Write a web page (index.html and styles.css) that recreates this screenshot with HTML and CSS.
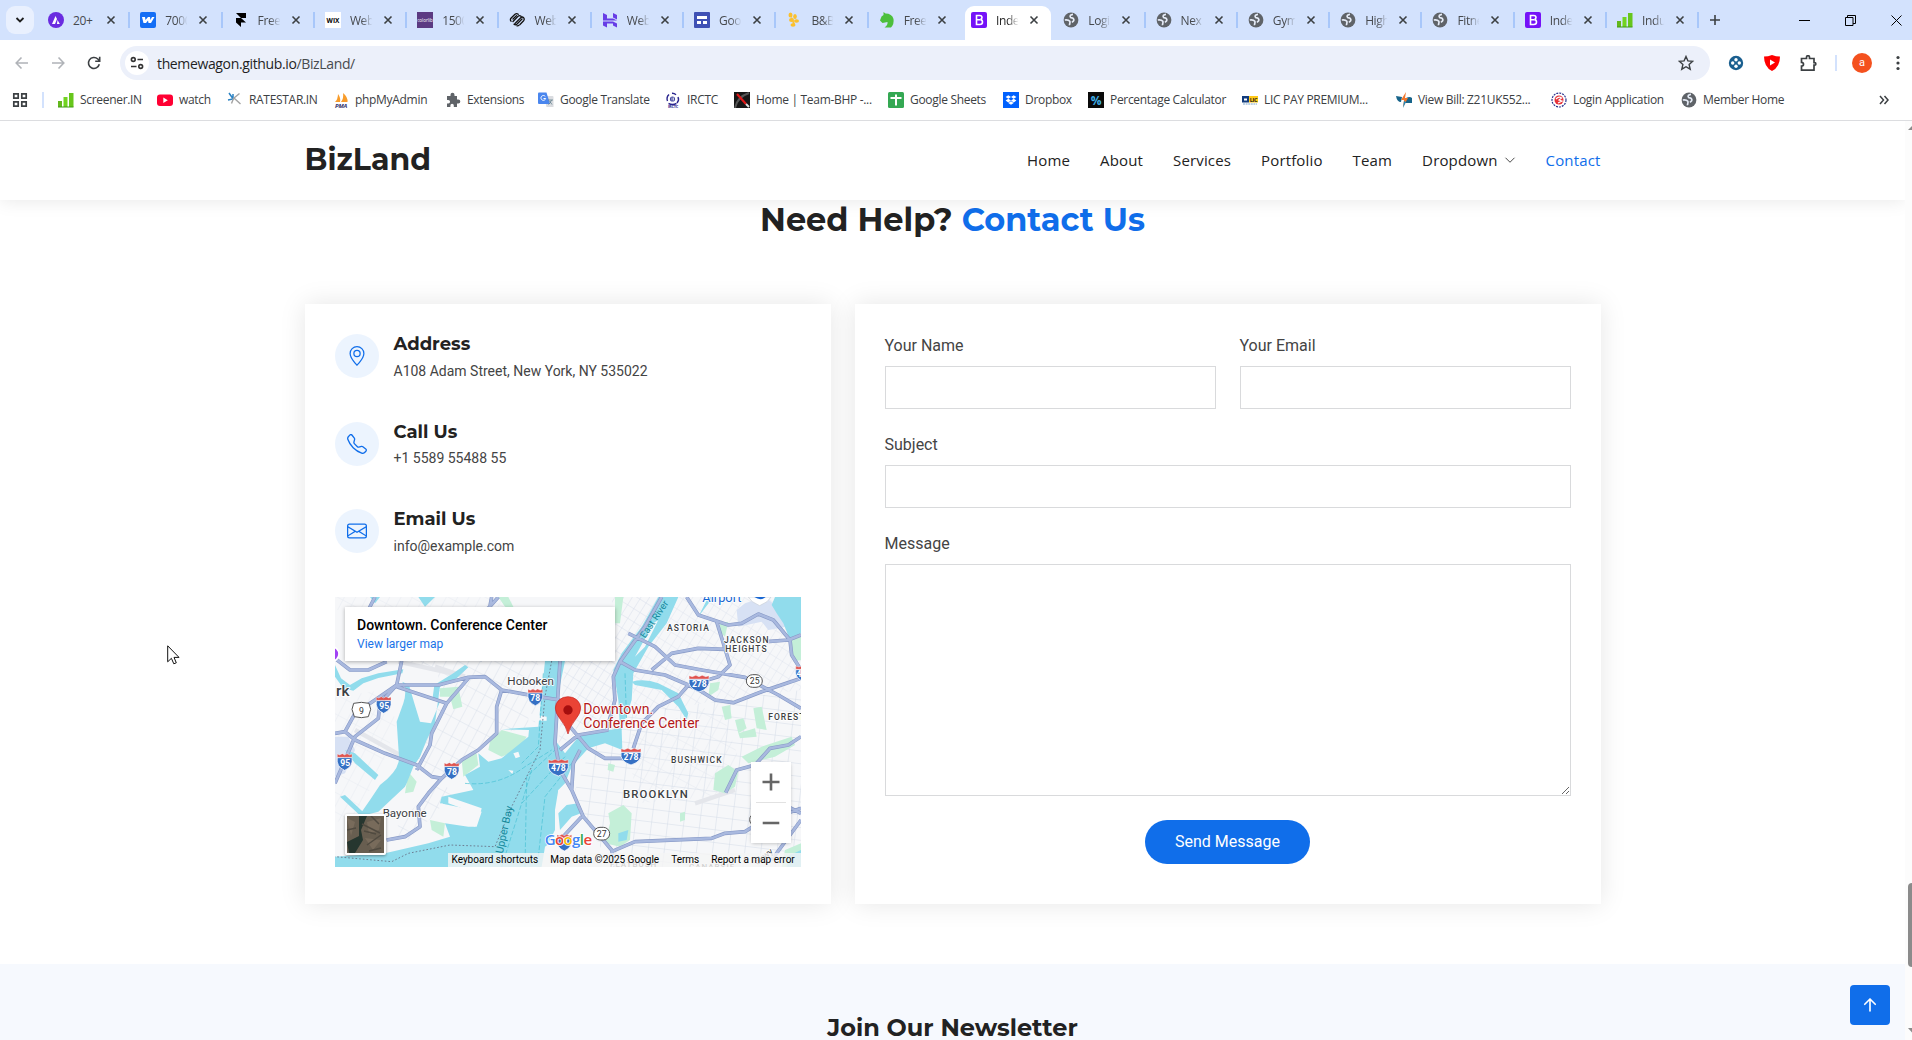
FILE: index.html
```html
<!DOCTYPE html>
<html lang="en">
<head>
<meta charset="utf-8">
<title>BizLand</title>
<link rel="stylesheet" href="styles.css">
</head>
<body>
<svg class="defs" width="0" height="0" aria-hidden="true">
  <symbol id="close" viewBox="0 0 10 10"><path d="M1.500 1.500l7 7M8.500 1.500l-7 7" stroke="#3c4043" stroke-width="1.600"/></symbol>
  <symbol id="globe" viewBox="0 0 16 16"><circle cx="8" cy="8" r="7.400" fill="#5f6368"/><path d="M10 2.300C7.500 2.500 6.500 4 7.500 5.300c1 1 3 .2 3.300 2.200.2 1.500-.8 2.300-2 2.700M1.800 8c2-.3 4 0 5 1.300.8 1.300-.6 2.200-.2 4" fill="none" stroke="#e6ecf7" stroke-width="1.700"/></symbol>
  <symbol id="bars" viewBox="0 0 16 16"><rect x="0" y="9" width="4" height="6" fill="#63b81c"/><rect x="5.500" y="5" width="4" height="10" fill="#72d321"/><rect x="11" y="1" width="4.500" height="14" fill="#67c61c"/><path d="M0 15h15.500" stroke="#3f9a12"/></symbol>
  <symbol id="boot" viewBox="0 0 16 16"><rect width="16" height="16" rx="2" fill="#7512f8"/><path d="M5.500 3.500h3.200q2.300 0 2.300 2.100 0 1.700-1.700 2 2.200.2 2.200 2.400 0 2.500-2.700 2.500H5.500zM5.500 7.800h3.500" fill="none" stroke="#fff" stroke-width="1.600"/></symbol>
</svg>

<div class="tabs">
  <div class="tab-search"><svg width="10" height="10" viewBox="0 0 10 10"><path d="M1.500 3L5 6.500 8.500 3" fill="none" stroke="#1f1f1f" stroke-width="1.800"/></svg></div>
  <div class="tab"><svg class="fav" viewBox="0 0 16 16"><circle cx="8" cy="8" r="8" fill="#6a2be0"/><path d="M4 12l3.500-8 1.500 3-2 5zM9.500 8l2.300 4H9z" fill="#fff"/></svg><span>20+</span><svg class="x"><use href="#close"/></svg></div>
  <div class="tab"><svg class="fav" viewBox="0 0 16 16"><rect width="16" height="16" rx="2" fill="#146ef5"/><path d="M2 5h3l.5 3L8 5h2l.4 3L12 5h2.500l-3.500 6H8.500L8 8.500 6 11H3.500z" fill="#fff"/></svg><span>7000</span><svg class="x"><use href="#close"/></svg></div>
  <div class="tab"><svg class="fav" viewBox="0 0 16 16"><path d="M3 1h10v5H8l5 4.500H8V15l-5-4.500V6h5z" fill="#000"/></svg><span>Free</span><svg class="x"><use href="#close"/></svg></div>
  <div class="tab"><svg class="fav" viewBox="0 0 16 16"><rect width="16" height="16" fill="#fff"/><text x="8" y="10.500" text-anchor="middle" font-size="6.500" font-weight="700">WIX</text></svg><span>Web</span><svg class="x"><use href="#close"/></svg></div>
  <div class="tab"><svg class="fav" viewBox="0 0 16 16"><rect width="16" height="16" fill="#5b3a82"/><text x="8" y="9.500" text-anchor="middle" font-size="4.500" fill="#fff">colorlib</text></svg><span>1500</span><svg class="x"><use href="#close"/></svg></div>
  <div class="tab"><svg class="fav" viewBox="0 0 16 16"><g fill="none" stroke="#111" stroke-width="1.300" stroke-linecap="round"><path d="M4 9.500L9 4.300q1.500-1.300 3 0M2 9.200q-1.300-1.600.2-3.200L6 2.300q1.600-1.300 3.200 0M6 11.500l6-6q1.400-1 2.600.2 1.200 1.500 0 3L11 12.500M5 12.300q1.400 1 2.800 0L13 7M8 13.800q1 .3 2-.5M4 7L7.500 3.600"/></g></svg><span>Web</span><svg class="x"><use href="#close"/></svg></div>
  <div class="tab"><svg class="fav" viewBox="0 0 16 16"><path d="M1 1l4 2v3.500h6L15 8.500H1zM11 1l4 2v4.500l-4-2zM1 9.500h10l4 2v4l-4-2v-2H5v4l-4-2z" fill="#673de6"/></svg><span>Web</span><svg class="x"><use href="#close"/></svg></div>
  <div class="tab"><svg class="fav" viewBox="0 0 16 16"><rect width="16" height="16" rx="1" fill="#3f51b5"/><path d="M3 4h10v3H3zM3 9h4v3H3zM9 9h4v3H9z" fill="#fff"/></svg><span>Goo</span><svg class="x"><use href="#close"/></svg></div>
  <div class="tab"><svg class="fav" viewBox="0 0 16 16"><g fill="#fbc02d"><ellipse cx="4.500" cy="3" rx="2" ry="2.500"/><ellipse cx="9" cy="4.500" rx="1.800" ry="2.500"/><ellipse cx="5.500" cy="8" rx="2.500" ry="2"/><ellipse cx="10.500" cy="9" rx="2.500" ry="1.800"/><ellipse cx="7" cy="13" rx="2.500" ry="1.800"/><path d="M5 3l4 9-2 1z"/></g></svg><span>B&amp;B</span><svg class="x"><use href="#close"/></svg></div>
  <div class="tab no-sep"><svg class="fav" viewBox="0 0 16 16"><path d="M4.500 0l2 1.500Q13 1.500 14.500 7q.8 5-2.500 8.500H5.500Q9 13 8.500 10L3.500 11 1 8.500 2.500 4.500 4.500 3z" fill="#4cbf3c"/></svg><span>Free</span><svg class="x"><use href="#close"/></svg></div>
  <div class="tab active no-sep"><svg class="fav"><use href="#boot"/></svg><span>Inde</span><svg class="x"><use href="#close"/></svg></div>
  <div class="tab"><svg class="fav"><use href="#globe"/></svg><span>Logi</span><svg class="x"><use href="#close"/></svg></div>
  <div class="tab"><svg class="fav"><use href="#globe"/></svg><span>Nex</span><svg class="x"><use href="#close"/></svg></div>
  <div class="tab"><svg class="fav"><use href="#globe"/></svg><span>Gym</span><svg class="x"><use href="#close"/></svg></div>
  <div class="tab"><svg class="fav"><use href="#globe"/></svg><span>High</span><svg class="x"><use href="#close"/></svg></div>
  <div class="tab"><svg class="fav"><use href="#globe"/></svg><span>Fitne</span><svg class="x"><use href="#close"/></svg></div>
  <div class="tab"><svg class="fav"><use href="#boot"/></svg><span>Inde</span><svg class="x"><use href="#close"/></svg></div>
  <div class="tab"><svg class="fav"><use href="#bars"/></svg><span>Indu</span><svg class="x"><use href="#close"/></svg></div>
  <svg class="plus" width="12" height="12" viewBox="0 0 12 12"><path d="M6 1v10M1 6h10" stroke="#3c4043" stroke-width="1.600"/></svg>
  <div class="window-controls">
    <svg width="11" height="11" viewBox="0 0 11 11"><path d="M0 5.500h11" stroke="#000"/></svg>
    <svg width="11" height="11" viewBox="0 0 11 11"><path d="M.5 2.500h7.500v8H.5zM2.500 2.500V.5h8v8H8" fill="none" stroke="#000"/></svg>
    <svg width="11" height="11" viewBox="0 0 11 11"><path d="M.5.5l10 10M10.500.5l-10 10" stroke="#000"/></svg>
  </div>
</div>

<div class="toolbar">
  <svg class="nav-icon" viewBox="0 0 14 14"><path d="M13 7H1.500M6.500 1.500L1.200 7l5.300 5.500" fill="none" stroke="#b0b3b8" stroke-width="1.600"/></svg>
  <svg class="nav-icon" viewBox="0 0 14 14"><path d="M1 7h11.500M7.500 1.500L12.800 7l-5.300 5.500" fill="none" stroke="#b0b3b8" stroke-width="1.600"/></svg>
  <svg class="nav-icon" viewBox="0 0 14 14"><path d="M12.300 8.300A5.500 5.500 0 1 1 10.800 3L12.300 4.500M12.700.8v4.500H8.200" fill="none" stroke="#3c4043" stroke-width="1.600"/></svg>
  <div class="omnibox">
    <div class="tune"><svg width="14" height="14" viewBox="0 0 14 14"><g fill="none" stroke="#333" stroke-width="1.600"><circle cx="3.300" cy="3.500" r="1.900"/><circle cx="10.700" cy="10.500" r="1.900"/><path d="M7.500 3.500H13M1 10.500h5.500"/></g></svg></div>
    <div class="url">themewagon.github.io<span>/BizLand/</span></div>
    <svg class="star" width="16" height="16" viewBox="0 0 16 16"><path d="M8 1.500l1.900 4.400 4.800.4-3.600 3.200 1.100 4.700L8 11.700l-4.200 2.500 1.100-4.700L1.300 6.300l4.800-.4z" fill="none" stroke="#3c4043" stroke-width="1.400"/></svg>
  </div>
  <div class="actions">
    <svg width="16" height="16" viewBox="0 0 16 16"><circle cx="8" cy="8" r="7.200" fill="#1a5f8f"/><g fill="#fff"><circle cx="8" cy="4.700" r="1.700"/><circle cx="8" cy="11.300" r="1.700"/><circle cx="4.700" cy="8" r="1.700"/><circle cx="11.300" cy="8" r="1.700"/></g></svg>
    <svg width="16" height="16" viewBox="0 0 16 16"><path d="M0 1.500Q4 1.500 8 0q4 1.500 8 1.500Q16 12 8 16 0 12 0 1.500z" fill="#f00"/><path d="M6 4.500l5 3-5 3z" fill="#fff"/></svg>
    <svg width="17" height="17" viewBox="0 0 17 17"><path d="M1.500 3.500h5V2.200a1.500 1.500 0 0 1 3 0v1.300h4.500v4.200h.6a1.200 1.200 0 0 1 0 2.500h-.6v5H1.500v-4q2 0 2-1.900t-2-1.900z" fill="none" stroke="#3c4043" stroke-width="1.700"/></svg>
    <i class="divider"></i>
    <div class="avatar">a</div>
    <svg width="4" height="16" viewBox="0 0 4 16"><g fill="#3c4043"><circle cx="2" cy="2.500" r="1.600"/><circle cx="2" cy="8" r="1.600"/><circle cx="2" cy="13.500" r="1.600"/></g></svg>
  </div>
</div>

<div class="bookmarks">
  <svg class="apps" width="16" height="16" viewBox="0 0 16 16"><path d="M1.800 1.800h4.400v4.400H1.800zM9.800 1.800h4.400v4.400H9.800zM1.800 9.800h4.400v4.400H1.800zM9.800 9.800h4.400v4.400H9.800z" fill="none" stroke="#3c4043" stroke-width="1.700"/></svg>
  <i class="divider"></i>
  <div class="marks">
    <div><svg><use href="#bars"/></svg>Screener.IN</div>
    <div><svg viewBox="0 0 16 16"><rect y="2.500" width="16" height="11.500" rx="3" fill="#f03"/><path d="M6.300 5.500l4.500 2.700-4.500 2.700z" fill="#fff"/></svg>watch</div>
    <div><svg viewBox="0 0 16 16"><path d="M2 1l3.500 5M6 2v5L1 8" stroke="#2a82c4" stroke-width="1.500" fill="none"/><path d="M12.500 1.500L7 6l6.500 6M6.500 6.500l-2 5" stroke="#a3a3a3" stroke-width="1.400" fill="none"/></svg>RATESTAR.IN</div>
    <div><svg viewBox="0 0 16 16"><path d="M2 10Q5 7 5 2q3 4 2 8zM8 10q3-4 2-9 5 4 4.500 9z" fill="#f89c2a"/><text x="8" y="16" text-anchor="middle" font-size="6" font-weight="700" font-style="italic" fill="#33336b">PMA</text></svg>phpMyAdmin</div>
    <div><svg viewBox="0 0 16 16"><path d="M2 4h3.500V2.800a2 2 0 0 1 4 0V4H12v3.500h1.300a2 2 0 0 1 0 4H12V15H8.800v-1.500a1.700 1.700 0 0 0-3.400 0V15H2v-3.500h1.300a1.700 1.700 0 0 0 0-3.500H2z" fill="#5f6368"/></svg>Extensions</div>
    <div><svg viewBox="0 0 16 16"><path d="M6 4h8.500q1 0 1 1v10h-7z" fill="#dadce0"/><path d="M1 .5h7.500L12 12H1q-1 0-1-1V1.500q0-1 1-1z" fill="#4a86ee"/><path d="M7.300 4.500a2.400 2.400 0 1 0 .4 2H5.500" fill="none" stroke="#fff"/><path d="M10 8h5M13.500 8q-1 3-3 4.500M11.500 9l2.500 3.500" fill="none" stroke="#607d8b" stroke-width=".8"/></svg>Google Translate</div>
    <div><svg viewBox="0 0 16 16"><g fill="none" stroke="#29258e" stroke-width="1.400"><path d="M4 2.500A6 6 0 0 0 2.500 9M7 1.200a5.500 5.500 0 0 1 4 1.500M13 5q1.500 3-1 6M3.500 11.500q4 2 8 0"/></g><circle cx="7.500" cy="7" r="2.600" fill="#454aa0"/><path d="M7 5.500v3M8.500 5.500v3" stroke="#fff" stroke-width=".7"/><text x="8" y="16" text-anchor="middle" font-size="4" font-weight="700" fill="#29258e">IRCTC</text></svg>IRCTC</div>
    <div><svg viewBox="0 0 16 16"><rect width="16" height="16" fill="#161616"/><path d="M1 16Q3 5 15 1" fill="none" stroke="#555" stroke-width="2"/><path d="M3 2l9 10" stroke="#e01818" stroke-width="2.200"/><path d="M12 12l3 3" stroke="#ddd" stroke-width="2"/></svg>Home | Team-BHP -...</div>
    <div><svg viewBox="0 0 16 16"><rect width="16" height="16" rx="1.500" fill="#34a853"/><path d="M8 2.500v11M2.500 6h11" stroke="#fff" stroke-width="2"/></svg>Google Sheets</div>
    <div><svg viewBox="0 0 16 16"><rect width="16" height="16" fill="#0061fe"/><path d="M5.300 3.200L8 5 5.300 6.800 2.600 5zM10.700 3.200L13.400 5l-2.700 1.800L8 5zM5.300 6.800L8 8.600l-2.700 1.800-2.700-1.800zM10.700 6.800l2.700 1.800-2.700 1.800L8 8.600zM5.300 11L8 9.300l2.700 1.700L8 12.800z" fill="#fff"/></svg>Dropbox</div>
    <div><svg viewBox="0 0 16 16"><rect width="16" height="16" fill="#0a0a0a"/><text x="8" y="12.500" text-anchor="middle" font-size="12" font-weight="700" fill="#3fb0e8">%</text></svg>Percentage Calculator</div>
    <div><svg viewBox="0 0 16 16"><rect y="4" width="7" height="6.500" fill="#123c7d"/><rect x="7" y="4" width="9" height="6.500" fill="#ffc917"/><path d="M2 6.500h3v2H2z" fill="#fff"/><text x="11.500" y="9.500" text-anchor="middle" font-size="5.500" font-weight="700" fill="#222">LIC</text><path d="M1 12h14" stroke="#a8c4dc" stroke-width="1.500" stroke-dasharray="2 .6"/></svg>LIC PAY PREMIUM...</div>
    <div><svg viewBox="0 0 16 16"><path d="M0 4l6 1-1 5q-4 0-5-6zM10 6q4-2 6 0v5H9z" fill="#17648a"/><path d="M10 0L5 8h3l-1 7 5-9H9z" fill="#f0762b"/><path d="M8 9l-1 7 3-6z" fill="#2388ba"/></svg>View Bill: Z21UK552...</div>
    <div><svg viewBox="0 0 16 16"><circle cx="8" cy="8" r="7" fill="#fff" stroke="#27308c" stroke-width="1.200" stroke-dasharray="2 1"/><circle cx="8" cy="8" r="4.500" fill="#e63238"/><path d="M5 7q3-3 5.500-1L8 8l3 1-4 2" fill="none" stroke="#fff" stroke-width="1.200"/></svg>Login Application</div>
    <div><svg><use href="#globe"/></svg>Member Home</div>
  </div>
  <svg class="more" width="10" height="10" viewBox="0 0 10 10"><path d="M1 1l3.500 4L1 9M5.500 1L9 5 5.500 9" fill="none" stroke="#3c4043" stroke-width="1.500"/></svg>
</div>

<div class="viewport">
  <div class="page">
    <header class="header">
      <div class="container">
        <h1 class="logo">BizLand</h1>
        <nav><a>Home</a><a>About</a><a>Services</a><a>Portfolio</a><a>Team</a><a>Dropdown<svg width="12" height="12" viewBox="0 0 16 16"><path d="M2 5l6 6 6-6" fill="none" stroke="#444" stroke-width="1.300"/></svg></a><a class="current">Contact</a></nav>
      </div>
    </header>
    <section class="contact">
      <h2>Need Help? <span>Contact Us</span></h2>
      <div class="container cards">
        <div class="card info">
          <div class="item"><div class="circle"><svg viewBox="0 0 16 16"><path d="M12.166 8.940c-.524 1.062-1.234 2.120-1.960 3.070A31.500 31.500 0 0 1 8 14.580a31.500 31.500 0 0 1-2.206-2.570c-.726-.950-1.436-2.008-1.960-3.070C3.304 7.867 3 6.862 3 6a5 5 0 0 1 10 0c0 .862-.305 1.867-.834 2.940M8 16s6-5.686 6-10A6 6 0 0 0 2 6c0 4.314 6 10 6 10"/><path d="M8 8a2 2 0 1 1 0-4 2 2 0 0 1 0 4m0 1a3 3 0 1 0 0-6 3 3 0 0 0 0 6"/></svg></div><div><h3>Address</h3><p>A108 Adam Street, New York, NY 535022</p></div></div>
          <div class="item"><div class="circle"><svg viewBox="0 0 16 16"><path d="M3.654 1.328a.678.678 0 0 0-1.015-.063L1.605 2.300c-.483.484-.661 1.169-.450 1.770a17.600 17.600 0 0 0 4.168 6.608 17.600 17.600 0 0 0 6.608 4.168c.601.211 1.286.033 1.770-.450l1.034-1.034a.678.678 0 0 0-.063-1.015l-2.307-1.794a.680.680 0 0 0-.580-.122l-2.190.547a1.750 1.750 0 0 1-1.657-.459L5.482 8.062a1.750 1.750 0 0 1-.460-1.657l.548-2.190a.680.680 0 0 0-.122-.580zM1.884.511a1.745 1.745 0 0 1 2.612.163L6.290 2.980c.329.423.445.974.315 1.494l-.547 2.190a.680.680 0 0 0 .178.643l2.457 2.457a.680.680 0 0 0 .644.178l2.189-.547a1.750 1.750 0 0 1 1.494.315l2.306 1.794c.829.645.905 1.870.163 2.611l-1.034 1.034c-.740.740-1.846 1.065-2.877.702a18.600 18.600 0 0 1-7.010-4.420 18.600 18.600 0 0 1-4.420-7.009c-.362-1.030-.037-2.137.703-2.877z"/></svg></div><div><h3>Call Us</h3><p>+1 5589 55488 55</p></div></div>
          <div class="item"><div class="circle"><svg viewBox="0 0 16 16"><path d="M0 4a2 2 0 0 1 2-2h12a2 2 0 0 1 2 2v8a2 2 0 0 1-2 2H2a2 2 0 0 1-2-2zm2-1a1 1 0 0 0-1 1v.217l7 4.200 7-4.200V4a1 1 0 0 0-1-1zm13 2.383-4.708 2.825L15 11.105zm-.034 6.876-5.640-3.471L8 9.583l-1.326-.795-5.640 3.470A1 1 0 0 0 2 13h12a1 1 0 0 0 .966-.741M1 11.105l4.708-2.897L1 5.383z"/></svg></div><div><h3>Email Us</h3><p>info@example.com</p></div></div>
          <div class="map">
            <svg class="tiles" width="466" height="270" viewBox="30 21 1398 810">
              <defs>
                <pattern id="st1" width="34" height="22" patternUnits="userSpaceOnUse" patternTransform="rotate(-58)"><path d="M0 0H34M0 0V22" stroke="#d3dbe7" stroke-width="2.500" fill="none"/></pattern>
                <pattern id="st2" width="48" height="38" patternUnits="userSpaceOnUse" patternTransform="rotate(7)"><path d="M0 0H48M0 0V38" stroke="#d3dbe7" stroke-width="3" fill="none"/></pattern>
                <pattern id="st3" width="30" height="52" patternUnits="userSpaceOnUse" patternTransform="rotate(28)"><path d="M0 0H30M0 0V52" stroke="#d3dbe7" stroke-width="2.500" fill="none"/></pattern>
                <g id="shield"><path d="M-22-11H22Q26 16 0 27-26 16-22-11z" fill="#3570c4" stroke="#fff" stroke-width="2"/><path d="M-22-12v-10l7 3 8-4 7 4 7-4 8 4 7-3v10z" fill="#df5450" stroke="#fff" stroke-width="1"/></g>
                <g id="shield-wide" transform="scale(1.35 1)"><use href="#shield"/></g>
              </defs>
              <rect x="30" y="21" width="1398" height="810" fill="#f6f7f9"/>
              <path d="M220 213L640 213 630 410 520 430 420 500 330 570 250 520 330 400 340 250z" fill="url(#st3)"/>
              <path d="M180 750L340 570 400 620 300 700 250 750z" fill="url(#st3)"/>
              <path d="M30 21H560V60H30zM30 320L180 300 215 400 160 560 90 670 30 700z" fill="url(#st3)" opacity=".5"/>
              <path d="M720 213H880L870 420 760 420 700 470zM860 21H1010L960 100 870 220z" fill="url(#st1)"/>
              <path d="M1060 21H1428V300L1180 330 930 380 920 260z" fill="url(#st1)" opacity=".75"/>
              <path d="M905 370L1428 300V831H860L780 690 750 600 800 470z" fill="url(#st2)"/>
              <path d="M900 440L1180 340 1240 500 1170 620 940 640z" fill="url(#st3)" opacity=".6"/>
              <g fill="none" stroke="#e4e6eb" stroke-width="13"><path d="M220 215L380 250M90 420L270 520M330 230L420 260M1110 640L1230 600"/></g>
              <g fill="#c4efd8">
                <path d="M345 295L400 290 412 350 385 358 375 320 345 320zM495 455L530 420 605 440 580 480 530 500 490 480zM410 510L455 490 460 525 415 560zM250 545L275 575 265 605 240 610zM315 690L360 700 355 740 320 720zM640 560L690 510 710 560 680 575zM520 21H550L570 60 540 50z"/>
                <path d="M870 21L895 21 885 100 870 100zM1185 100L1210 95 1200 140 1183 125zM1380 21H1428V60L1395 40zM1395 150L1428 130V210L1405 215zM1190 350L1215 345 1220 385 1200 390zM1230 390L1255 385 1265 415 1240 430zM1240 430L1290 415 1295 440 1245 445zM1285 355L1310 350 1325 420 1295 415zM1170 550L1210 525 1240 545 1230 590 1200 610 1165 600zM1250 500L1310 470 1400 440 1410 465 1350 500 1270 520zM850 670L895 645 920 670 915 750 885 770 840 760 855 700zM850 520L870 525 865 545 848 540zM1380 780L1428 760V831H1370zM1155 280L1185 275 1180 300 1150 320zM1065 670L1080 665 1080 690 1065 695z"/>
              </g>
              <path d="M30 440L70 440 90 480 60 550 30 560z" fill="#d7e1f4"/>
              <path d="M1235 60L1260 40 1320 21 1370 60 1385 110 1330 120 1310 95 1240 110z" fill="#d7e1f4"/>
              <g fill="#91dcec">
                <path d="M245 580L240 590 160 665 100 680 135 630 165 585Q225 540 222 500L215 395 235 340Q248 300 232 275L252 285 268 340 285 395 318 400 345 335 322 330 328 285 385 250 420 225 430 232 395 265 345 290 340 325 330 400 305 450 285 500 265 530z"/>
                <path d="M30 225L48 265 75 285 110 265 160 250 235 238 232 250 160 264 115 280 85 302 55 295 30 260z"/>
                <path d="M60 480L90 490 160 555 150 570 90 520zM45 620L60 615 140 690 130 700zM135 21H165L150 40zM280 21H330L300 50zM1150 21H1165L1120 80z"/>
                <path d="M660 213H720L700 310 690 450 720 490 765 435 885 415 880 330 865 240 890 190 950 110 1000 21H1060L1025 100 970 170 925 250 920 330 890 420 892 480 840 460 790 475 740 530 720 580 700 600 690 660 690 720 670 760 650 831H30V800L180 790 310 760 375 740 360 700 430 710 455 710 470 665 345 640 350 620 445 600 420 555 465 530 460 490 490 515 530 505 610 440 612 420 530 418 640 410z"/>
                <path d="M1350 21H1428V130L1395 150 1375 100 1355 70 1340 45zM920 275Q960 265 1000 280L1060 310 1090 370 1085 390 1060 350 1010 300 930 285zM880 730L910 720 905 750 880 755zM1385 800L1428 780V831H1385z"/>
              </g>
              <g fill="#f6f7f9"><path d="M370 620L470 655 465 675 370 640zM350 640L455 690 450 710 340 660zM380 585L410 570 430 590 400 600zM930 200L985 100 1000 90 960 170zM565 490L580 485 585 500 572 505zM550 540L565 542 562 552zM610 370L665 380V392H610zM700 600L740 590 775 680 735 700 700 725 695 680zM660 770L700 740 800 760 855 831H650z"/></g>
              <path d="M725 645L760 640 768 670 740 680 705 720 700 670z" fill="#91dcec"/>
              <g fill="none" stroke="#45bfd3" stroke-width="2" stroke-dasharray="14 6"><path d="M420 580Q520 590 600 530L680 480M600 831L605 560 690 480M655 250L640 470 590 520M530 831L590 640 720 500M640 800L660 620 740 520M900 250L905 400M620 540L590 640"/></g>
              <g fill="none" stroke="#6d7f94" stroke-width="3" stroke-dasharray="5 6"><path d="M680 213L660 320 645 480 560 650 510 770 375 765 250 790 200 815 30 800"/></g>
              <g fill="none" stroke="#8799c6" stroke-width="11" stroke-linejoin="round"><path id="r1" d="M30 430L60 425 90 450 180 490 275 525 320 560 350 565 410 510 460 480 515 430 515 350 530 300 480 260 430 262 340 285 215 285 150 330 90 370 60 425M230 213L215 285 165 340 160 385 90 440 30 580M215 290L365 340M430 265L365 340 320 430 315 465 275 540M530 300L640 320 705 330M350 565L310 610 280 650 285 710 240 740 185 750M30 205L75 240 130 240 185 215M520 21L490 55M705 213L690 460 705 540 740 600 775 680 860 780 870 831M705 480L760 435 850 420M735 410L790 475 840 505 915 505M765 480L745 520 740 600M1010 21L960 110 885 215 865 260 870 330 845 420M885 215L930 240 1020 255 1090 285 1130 305 1170 330 1225 338 1310 305 1428 265M925 475L950 400 1000 350 1060 320 1090 285M910 130L990 170 1050 225 1130 240 1260 262 1360 315 1428 355M980 240L1040 190 1120 175 1200 178M1085 21L1120 75 1210 105 1250 100 1300 72 1345 90 1395 150 1400 195 1425 235M1175 95L1195 160 1215 225 1180 260 1130 275M1325 155L1390 150 1428 135M1202 608L1235 540 1290 525 1335 475 1390 465 1428 440M860 785L930 755 1160 745 1200 730 1260 725 1300 700 1428 655M705 750L770 680M1350 630L1428 670M1340 810L1428 690M150 21L130 60M500 21L465 213"/></g>
              <use href="#r1" stroke="#a9b9df" stroke-width="7.500" stroke-linejoin="round" fill="none"/>
              <path d="M20 170a22 22 0 0 1 0 44" fill="#a142f4" stroke="#fff" stroke-width="5"/>
              <path d="M1270 21h68l-12 14-22 12-22-12z" fill="#fff" stroke="#c7cdd6" stroke-width="2"/><path d="M1288 21h34q-15 13-34 0z" fill="#1967d2"/>
              <g class="badges">
                <use href="#shield" x="176" y="343"/><text x="178" y="357">95</text><use href="#shield" x="59" y="514"/><text x="61" y="528">95</text>
                <use href="#shield" x="380" y="541"/><text x="381" y="555">78</text><use href="#shield" x="631" y="320"/><text x="631" y="333">78</text>
                <use href="#shield-wide" x="700" y="531"/><text x="700" y="543">478</text><use href="#shield-wide" x="1122" y="279"/><text x="1123" y="291">278</text>
                <use href="#shield-wide" x="918" y="498"/><text x="918" y="510">278</text><use href="#shield-wide" x="1442" y="250"/><text x="1422" y="261">4</text><use href="#shield" x="718" y="756"/>
              </g>
              <g class="routes"><path d="M86 340q23-6 46 0l5 18-7 22q-21 6-42 0l-7-22z"/><rect x="1264" y="254" width="48" height="38" rx="19"/><rect x="806" y="712" width="48" height="38" rx="19"/><rect x="1274" y="670" width="46" height="38" rx="19"/><text x="109" y="371">9</text><text x="1289" y="282">25</text><text x="830" y="740">27</text></g>
              <g class="places">
                <text x="33" y="317" font-size="46" class="area">rk</text><text x="547" y="285" font-size="35">Hoboken</text><text x="173" y="681" font-size="34.500">Bayonne</text>
                <text x="1026" y="123" font-size="25.500" letter-spacing="3.300" class="area">ASTORIA</text><text x="1197" y="159" font-size="25.500" letter-spacing="3.200" class="area">JACKSON</text><text x="1201" y="186" font-size="25.500" letter-spacing="3" class="area">HEIGHTS</text>
                <text x="1330" y="390" font-size="25.500" letter-spacing="3" class="area">FOREST</text><text x="1038" y="519" font-size="25.500" letter-spacing="3.300" class="area">BUSHWICK</text><text x="894" y="624" font-size="34" letter-spacing="3.500" class="area">BROOKLYN</text>
                <text x="855" y="831" font-size="24" letter-spacing="3" class="area">FLATBUSH</text><text x="1092" y="836" font-size="24" letter-spacing="3" class="area">CANARSIE</text>
                <text x="1132" y="35" font-size="38.500" class="blue">Airport</text><text transform="translate(1297 826) rotate(-38)" font-size="27">okwy</text>
                <text transform="translate(533 792) rotate(-78)" font-size="32" class="water">Upper Bay</text><text transform="translate(960 146) rotate(-56)" font-size="29" class="water">East River</text>
                <text x="775" y="372" font-size="42" class="red">Downtown.</text><text x="775" y="414" font-size="42" class="red">Conference Center</text>
              </g>
              <path d="M729 432Q724 410 706 388 690 368 691 354A38 34 0 0 1 767 354Q767 370 752 388 734 410 729 432z" fill="#ea4335" stroke="#c5221f" stroke-width="2"/><circle cx="729" cy="360" r="14" fill="#a50e0e"/>
              <text x="659" y="766" class="google"><tspan fill="#4285f4">G</tspan><tspan fill="#ea4335">o</tspan><tspan fill="#fbbc04">o</tspan><tspan fill="#4285f4">g</tspan><tspan fill="#34a853">l</tspan><tspan fill="#ea4335">e</tspan></text>
            </svg>
            <div class="place-card"><b>Downtown. Conference Center</b><span>View larger map</span></div>
            <svg class="satellite" viewBox="0 0 37 37"><rect width="37" height="37" fill="#685e50"/><path d="M12 0L20 0 14 14 16 24 8 37H2L0 26 12 20z" fill="#26362f"/><path d="M0 2l8 4-4 14M20 6l14-4-2 12-10 4zM18 22l16 2-8 10z" fill="#786b5b"/><path d="M17 15l12 3M20 29l14-10M15 8l18 9M0 14l9-2M24 0l8 8M22 35l12-3" stroke="#504a40" stroke-width="1.500"/></svg>
            <div class="zoom"><svg viewBox="0 0 40 40"><path d="M20 11.500v17M11.500 20h17" stroke="#666" stroke-width="2.600"/></svg><svg viewBox="0 0 30 41"><path d="M6.500 20.500h17" stroke="#666" stroke-width="2.600"/></svg></div>
            <div class="legal"><span>Keyboard shortcuts</span><span>Map data ©2025 Google</span><span>Terms</span><span>Report a map error</span></div>
          </div>
        </div>
        <form class="card form">
          <label>Your Name<input type="text"></label>
          <label>Your Email<input type="text"></label>
          <label class="wide">Subject<input type="text"></label>
          <label class="wide">Message<textarea></textarea></label>
          <button type="button" class="wide">Send Message</button>
        </form>
      </div>
    </section>
    <section class="newsletter"><h4>Join Our Newsletter</h4></section>
  </div>
  <svg class="scrollbar" width="7" height="919" viewBox="0 0 7 919"><rect width="7" height="919" fill="#fcfcfc"/><path d="M7 5v4H3z" fill="#8b8b8b"/><rect x="3" y="762" width="12" height="84" rx="4" fill="#8b8b8b"/><path d="M3 907h4v4.500z" fill="#8b8b8b"/></svg>
  <div class="to-top"><svg width="24" height="24" viewBox="0 0 16 16"><path d="M8 12V4.500M4.500 7.500L8 4l3.500 3.500" fill="none" stroke="#fff" stroke-width="1.100" stroke-linecap="round" stroke-linejoin="round"/></svg></div>
</div>
<svg class="cursor" width="14" height="21" viewBox="0 0 14 21"><path d="M.7.800v16l3.700-3.500 2.400 5.500 2.500-1-2.300-5.400h5z" fill="#fff" stroke="#111"/></svg>
</body>
</html>
```
FILE: styles.css
```css
* { box-sizing: border-box; }
body { margin: 0; width: 1912px; height: 1040px; overflow: hidden; position: relative; background: #fff; font-family: "Open Sans", "Noto Sans", sans-serif; color: #444; }
h1, h2, h3, h4, p { margin: 0; }
.defs { position: absolute; }

/* browser frame */
.tabs { display: flex; align-items: center; height: 40px; padding-left: 6px; background: #d3e2fd; font-size: 12px; }
.tab-search { display: flex; align-items: center; justify-content: center; width: 28px; height: 28px; margin-right: 4px; border-radius: 9px; background: #e9f0fe; }
.tab { position: relative; display: flex; align-items: center; width: 92.3px; height: 34px; margin-top: 6px; padding: 0 0 6px 10px; color: #46494d; flex: none; }
.tab::after { content: ""; position: absolute; right: 0; top: 6px; width: 2px; height: 16px; background: #a8c7fa; }
.tab.no-sep::after { display: none; }
.fav { width: 16px; height: 16px; flex: none; }
.tab span { width: 23px; margin: 0 10px 0 9px; overflow: hidden; white-space: nowrap; letter-spacing: -.4px; mask-image: linear-gradient(90deg, #000 50%, transparent 98%); }
.tab:nth-child(2) span { mask-image: none; }
.tab .x { width: 10px; height: 10px; }
.tab.active::before { content: ""; position: absolute; z-index: -1; inset: 0 2px 0 4px; border-radius: 9px 9px 0 0; background: #fff; }
.tab.active { z-index: 0; color: #1f1f1f; }
.plus { margin-left: 10px; }
.window-controls { display: flex; gap: 35px; margin-left: auto; padding-right: 10px; }

.toolbar { display: flex; align-items: center; height: 40px; margin-top: 3px; padding-left: 15px; }
.nav-icon { width: 14px; height: 14px; margin-right: 22px; }
.omnibox { display: flex; align-items: center; width: 1590px; height: 34px; margin-left: -3px; padding: 0 16px 0 5px; border-radius: 17px; background: #ecf0fa; }
.tune { display: flex; align-items: center; justify-content: center; width: 24px; height: 24px; border-radius: 50%; background: #fff; }
.url { flex: 1; margin-left: 8px; font-size: 14px; letter-spacing: -.36px; color: #1f1f1f; }
.url span { color: #474a4e; }
.actions { display: flex; align-items: center; gap: 20px; margin-left: 18px; }
.divider { width: 2px; height: 16px; background: #d3e2fd; }
.actions .divider { margin: 0 -4px 0 -2px; }
.avatar { width: 20px; height: 20px; border-radius: 50%; background: #f4511e; color: #fff; font: 11px/19px Roboto, sans-serif; text-align: center; margin: 0 4px 0 -1px; }
.bookmarks { display: flex; align-items: center; height: 38px; padding: 0 0 4px 12px; border-bottom: 1px solid #dcdde0; }
.bookmarks > .divider { margin: 0 14px; }
.marks { display: grid; grid-template-columns: 99px 70px 106px 112px 93px 127px 69px 154px 115px 85px 154px 154px 155px 130px 195px; font-size: 12px; letter-spacing: -.31px; line-height: 16px; color: #3c4043; white-space: nowrap; }
.marks div { display: flex; align-items: center; gap: 6px; }
.marks svg { width: 16px; height: 16px; flex: none; }
.more { margin-left: 3px; }

/* site */
.viewport { display: flex; position: relative; height: 919px; overflow: hidden; }
.page { width: 1905px; flex: none; }
.container { width: 1296px; margin: 0 auto; }
.header { position: relative; height: 79px; background: #fff; box-shadow: 0 0 18px rgba(0, 0, 0, .1); clip-path: inset(0 0 -40px 0); }
.header .container { display: flex; align-items: center; justify-content: space-between; height: 77px; }
.logo, h2, h3, h4 { font-family: Montserrat, Inter, sans-serif; font-weight: 700; color: #222; }
.logo { font-size: 30px; }
nav { display: flex; gap: 30px; font-size: 15px; font-weight: 500; letter-spacing: .15px; color: #222; }
nav a { display: flex; align-items: center; gap: 6px; }
.current, h2 span { color: #106eea; }
.contact { padding-bottom: 60px; }
h2 { margin-top: 1px; font-size: 32px; line-height: 38px; text-align: center; }
.cards { display: grid; grid-template-columns: 526px 746px; gap: 24px; margin-top: 65px; }
.card { height: 600px; padding: 30px; background: #fff; box-shadow: 0 0 25px rgba(0, 0, 0, .1); }
.item { display: flex; gap: 15px; height: 87.7px; }
.circle { display: flex; align-items: center; justify-content: center; width: 44px; height: 44px; border-radius: 50%; background: #ecf4fe; }
.circle svg { width: 20px; height: 20px; fill: #106eea; }
h3 { margin-top: -1px; font-size: 18px; line-height: 22px; }
.item p { margin-top: 5.7px; font: 14px/21px Roboto, sans-serif; }

.map { position: relative; width: 466px; height: 270px; overflow: hidden; font-family: Roboto, sans-serif; }
.tiles { display: block; }
.tiles text { font-family: Roboto, sans-serif; }
.badges text { font-size: 26px; font-weight: 700; fill: #fff; text-anchor: middle; }
.routes path, .routes rect { fill: #fff; stroke: #555; stroke-width: 3; }
.routes text { font-size: 26px; text-anchor: middle; fill: #333; }
.places text { fill: #3c4043; stroke: #fff; stroke-width: 5; stroke-linejoin: round; paint-order: stroke; }
.places .area { font-weight: 500; }
.places .blue { fill: #1967d2; }
.places .red { fill: #b3191a; }
.places .water { fill: #168a9c; stroke: none; }
.tiles .google { font-family: "Open Sans", sans-serif; font-size: 45px; font-weight: 600; letter-spacing: -1.8px; stroke: #fff; stroke-width: 5; paint-order: stroke; }
.place-card { position: absolute; left: 10px; top: 10px; width: 270px; height: 54px; padding: 10px 12px 10px 12.5px; background: #fff; box-shadow: 0 1px 4px rgba(0, 0, 0, .3); line-height: 16px; }
.place-card b { display: block; font-size: 14px; font-weight: 500; color: #000; }
.place-card span { display: block; margin-top: 3px; font-size: 12px; color: #1a73e8; }
.satellite { position: absolute; left: 10px; top: 217px; width: 41px; height: 41px; border: 2px solid #fff; border-radius: 2px; box-shadow: 0 1px 3px rgba(0, 0, 0, .4); }
.zoom { position: absolute; left: 416px; top: 165px; width: 40px; height: 81px; background: #fff; box-shadow: 0 1px 4px -1px rgba(0, 0, 0, .3); }
.zoom svg { display: block; width: 40px; height: 40px; }
.zoom svg + svg { width: 30px; height: 41px; margin-left: 5px; border-top: 1px solid #e2e2e2; }
.legal { position: absolute; right: 0; bottom: 0; display: flex; gap: 12px; height: 14px; width: 353px; padding-left: 4px; background: rgba(245, 245, 245, .8); font-size: 10px; line-height: 14px; color: #000; white-space: nowrap; }

.form { display: grid; grid-template-columns: 331px 331px; gap: 24px; align-content: start; font: 16px/24px Roboto, sans-serif; }
.form label { display: block; }
.wide { grid-column: 1 / -1; }
input, textarea { display: block; width: 100%; height: 43px; margin: 8px 0 0; border: 1px solid #d9dadc; background: #fff; }
textarea { height: 232px; }
button { justify-self: center; width: 165px; height: 44px; padding: 0 0 2px; border: 0; border-radius: 22px; background: #106eea; color: #fff; font: 16px Roboto, sans-serif; }
.newsletter { height: 76px; padding-top: 49px; background: #f6f9fe; text-align: center; }
h4 { font-size: 24px; line-height: 30px; }
.scrollbar { flex: none; }
.to-top { position: absolute; left: 1850px; top: 864px; display: flex; align-items: center; justify-content: center; width: 40px; height: 40px; border-radius: 4px; background: #106eea; }
.cursor { position: absolute; left: 167px; top: 645px; }
```
